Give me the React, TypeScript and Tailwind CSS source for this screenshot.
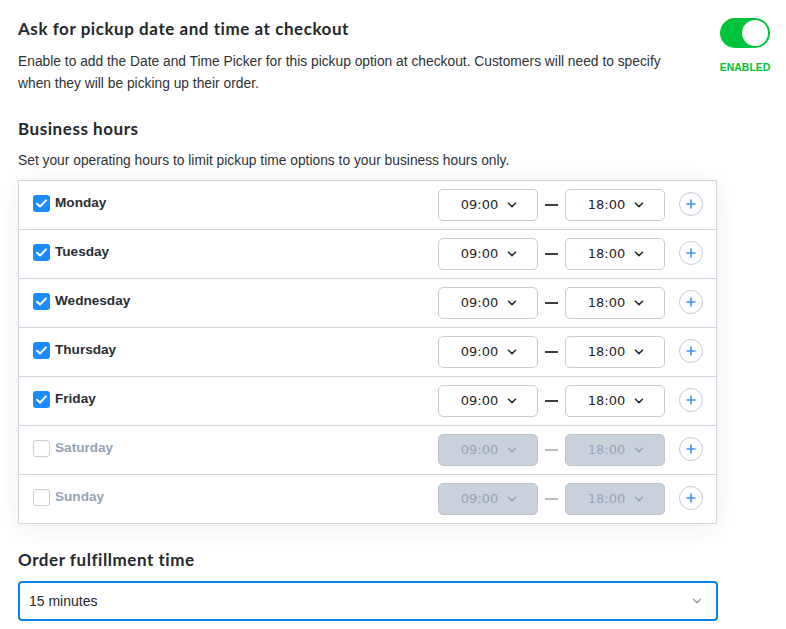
import React from "react";

const heading = { fontFamily: "Lato, 'Noto Sans', sans-serif", letterSpacing: "0.55px" };
const body = { fontFamily: "'Liberation Sans', Arial, sans-serif" };
const timeFont = { fontFamily: "'DejaVu Sans', sans-serif" };

type Day = { name: string; on: boolean };

const days: Day[] = [
  { name: "Monday", on: true },
  { name: "Tuesday", on: true },
  { name: "Wednesday", on: true },
  { name: "Thursday", on: true },
  { name: "Friday", on: true },
  { name: "Saturday", on: false },
  { name: "Sunday", on: false },
];

function Chevron({ className }: { className: string }) {
  return (
    <svg width="10" height="6" viewBox="0 0 10 6" className={className}>
      <path d="M1.5 1.2 L5 4.6 L8.5 1.2" fill="none" stroke="currentColor" strokeWidth="1.6" strokeLinecap="round" strokeLinejoin="round" />
    </svg>
  );
}

function TimeSelect({ value, on }: { value: string; on: boolean }) {
  return (
    <div
      className={
        "flex h-[32px] w-[100px] items-center justify-center gap-[9px] rounded-[5px] border " +
        (on ? "border-[#c4cdd6] bg-white text-[#1f2328]" : "border-[#bcc5cf] bg-[#c9d1da] text-[#97a3b2]")
      }
    >
      <span className="pl-[2px] text-[13px]" style={timeFont}>{value}</span>
      <Chevron className={on ? "text-[#2a2e33]" : "text-[#97a3b2]"} />
    </div>
  );
}

function Checkbox({ on }: { on: boolean }) {
  if (on) {
    return (
      <div className="flex h-[17px] w-[17px] items-center justify-center rounded-[3px] bg-[#1a8cff]">
        <svg width="13" height="11" viewBox="0 0 13 11">
          <path d="M2 5.8 L5 8.6 L11 2.4" fill="none" stroke="white" strokeWidth="2" strokeLinecap="round" strokeLinejoin="round" />
        </svg>
      </div>
    );
  }
  return <div className="h-[17px] w-[17px] rounded-[3px] border border-[#c8d0d9] bg-white" />;
}

function PlusButton() {
  return (
    <div className="flex h-[24px] w-[24px] items-center justify-center rounded-full border border-[#c3ccd6] bg-white">
      <svg width="10" height="10" viewBox="0 0 10 10">
        <path d="M5 1 V9 M1 5 H9" stroke="#3897f7" strokeWidth="1.6" strokeLinecap="round" />
      </svg>
    </div>
  );
}

function DayRow({ day, last }: { day: Day; last: boolean }) {
  return (
    <div className={"flex items-center pl-[14px] pr-[13px] " + (last ? "h-[48px]" : "h-[49px] border-b border-[#cfd6de]")}>
      <div className="flex flex-1 items-center gap-[5px] pb-[3px]">
        <Checkbox on={day.on} />
        <span
          className={"text-[13.6px] font-bold " + (day.on ? "text-[#2a2e33]" : "text-[#95a2b3]")}
          style={body}
        >
          {day.name}
        </span>
      </div>
      <div className="flex items-center">
        <TimeSelect value="09:00" on={day.on} />
        <div className="mx-[7px] h-[1.5px] w-[13px] bg-[#3a3f45]" style={{ opacity: day.on ? 1 : 0.35 }} />
        <TimeSelect value="18:00" on={day.on} />
      </div>
      <div className="ml-[14px] pb-[2px]">
        <PlusButton />
      </div>
    </div>
  );
}

export default function App() {
  return (
    <div className="min-h-[629px] w-[786px] bg-white pl-[18px] pr-[16px] pt-[18px] text-[#24282d]">
      <div className="flex">
        <div className="flex-1">
          <h2 className="text-[17px] font-bold leading-[22px] text-[#24282d]" style={heading}>
            Ask for pickup date and time at checkout
          </h2>
          <p className="mt-[11px] w-[660px] text-[13.8px] leading-[22px] text-[#2e3236]" style={body}>
            Enable to add the Date and Time Picker for this pickup option at checkout. Customers will need to specify
            when they will be picking up their order.
          </p>
        </div>
        <div className="flex w-[50px] flex-col items-center">
          <div className="flex h-[30px] w-[50px] items-center justify-end rounded-full bg-[#00c43b] pr-[2px]">
            <div className="h-[26px] w-[26px] rounded-full bg-white" />
          </div>
          <span className="mt-[12px] text-[10.5px] font-bold text-[#00c43b]" style={body}>
            ENABLED
          </span>
        </div>
      </div>

      <h2 className="mt-[23px] text-[17px] font-bold leading-[22px] text-[#24282d]" style={heading}>
        Business hours
      </h2>
      <p className="mt-[10px] text-[13.8px] leading-[22px] text-[#2e3236]" style={body}>
        Set your operating hours to limit pickup time options to your business hours only.
      </p>

      <div className="mt-[8px] w-[699px] border border-[#cfd6de] bg-white shadow-[0_4px_24px_rgba(30,40,60,0.08)]">
        {days.map((d, i) => (
          <DayRow key={d.name} day={d} last={i === days.length - 1} />
        ))}
      </div>

      <h2 className="mt-[25px] text-[17px] font-bold leading-[22px] text-[#24282d]" style={heading}>
        Order fulfillment time
      </h2>
      <div className="mt-[10px] flex h-[40px] w-[700px] items-center justify-between rounded-[4px] border-2 border-[#0a84ed] pl-[9px] pr-[14px]">
        <span className="text-[14px] text-[#24282d]" style={body}>15 minutes</span>
        <Chevron className="text-[#9aa5b4]" />
      </div>
    </div>
  );
}
